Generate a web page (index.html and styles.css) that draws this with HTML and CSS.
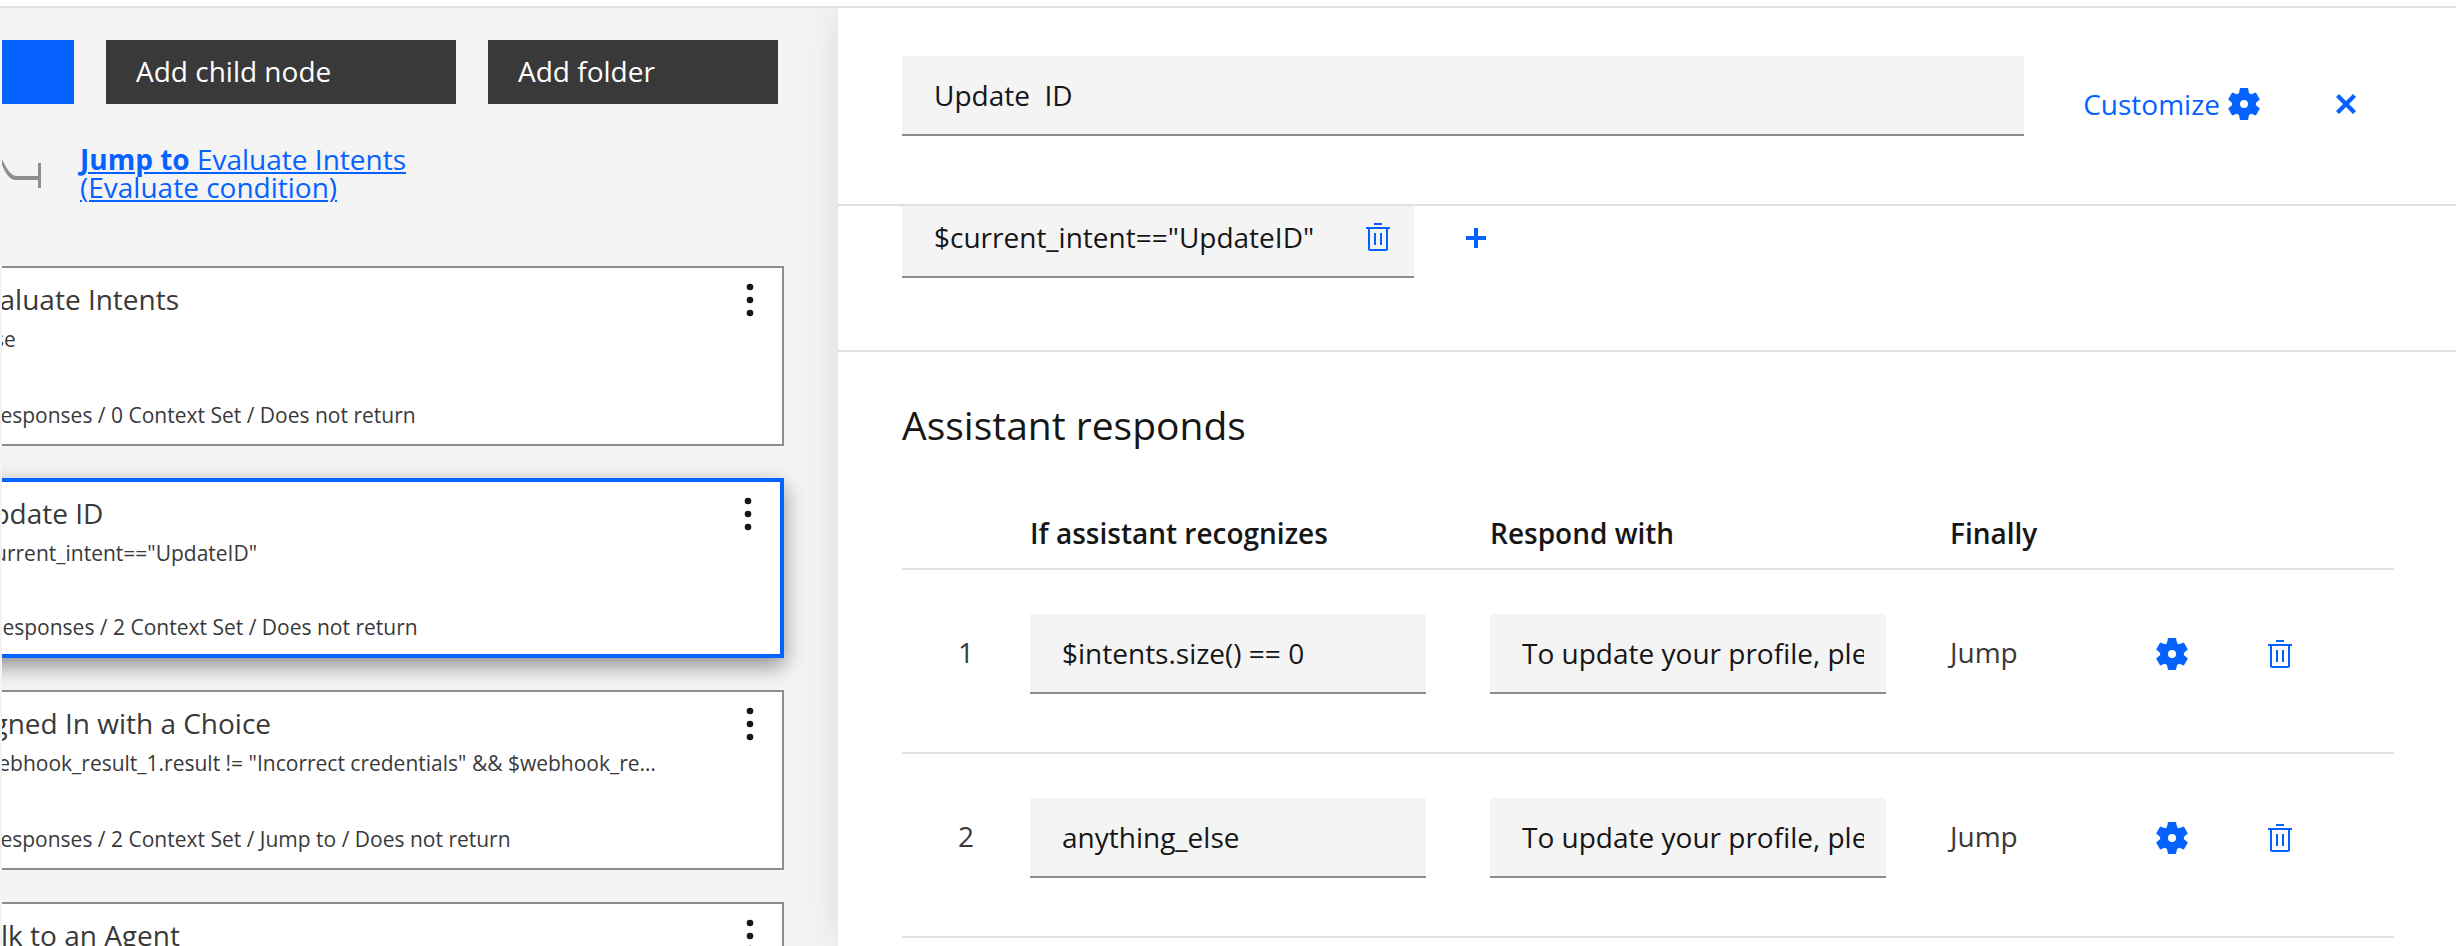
FILE: index.html
```
<!DOCTYPE html>
<html lang="en">
<head>
<meta charset="utf-8">
<title>Dialog</title>
<link rel="stylesheet" href="styles.css">
</head>
<body>
<svg class="sprite" aria-hidden="true">
  <symbol id="trash" viewBox="0 0 32 32"><path d="M12 12h2v12h-2zM18 12h2v12h-2zM4 6v2h2v20a2 2 0 0 0 2 2h16a2 2 0 0 0 2-2V8h2V6zM8 28V8h16v20zM12 2h8v2h-8z"/></symbol>
  <symbol id="gear" viewBox="-16 -16 32 32">
    <path fill-rule="evenodd" d="M0-12a12 12 0 1 0 0 24a12 12 0 1 0 0-24zM0-4a4 4 0 1 1 0 8a4 4 0 1 1 0-8z"/>
    <path id="tooth" d="M-4-16h8l1 5h-10z"/>
    <use href="#tooth" transform="rotate(60)"/>
    <use href="#tooth" transform="rotate(120)"/>
    <use href="#tooth" transform="rotate(180)"/>
    <use href="#tooth" transform="rotate(240)"/>
    <use href="#tooth" transform="rotate(300)"/>
  </symbol>
  <symbol id="dots" viewBox="0 0 32 40"><circle cx="16" cy="7" r="3.3"/><circle cx="16" cy="20" r="3.3"/><circle cx="16" cy="33" r="3.3"/></symbol>
</svg>
<div class="app">
  <div class="topbar"></div>
  <div class="workspace">
    <section class="tree" aria-label="Nodes">
      <div class="tree-view">
        <div class="tree-content">
          <div class="toolbar">
            <button class="btn btn-primary" type="button">Add node</button>
            <button class="btn" type="button">Add child node</button>
            <button class="btn btn-folder" type="button">Add folder</button>
          </div>
          <div class="jump">
            <svg class="jump-arrow" viewBox="0 0 40 56" aria-hidden="true">
              <path d="M0 14V20C4 29 8 35 14 35H36V31H15C10 31 6 27 0 14z"/>
              <path d="M36 18h3v25h-3z"/>
            </svg>
            <a class="jump-link" href="#evaluate"><strong>Jump to</strong> Evaluate Intents<br>(Evaluate condition)</a>
          </div>
          <div class="cards">
            <article class="card" id="evaluate">
              <div class="card-body">
                <div class="card-title">Evaluate Intents</div>
                <div class="card-condition">false</div>
                <div class="card-meta">0 Responses / 0 Context Set / Does not return</div>
              </div>
              <button class="card-menu" type="button" aria-label="Node options"><svg class="dots"><use href="#dots"/></svg></button>
            </article>
            <article class="card card-selected">
              <div class="card-body">
                <div class="card-title">Update ID</div>
                <div class="card-condition">$current_intent=="UpdateID"</div>
                <div class="card-meta">2 Responses / 2 Context Set / Does not return</div>
              </div>
              <button class="card-menu" type="button" aria-label="Node options"><svg class="dots"><use href="#dots"/></svg></button>
            </article>
            <article class="card">
              <div class="card-body">
                <div class="card-title">Signed In with a Choice</div>
                <div class="card-condition">$webhook_result_1.result != "Incorrect credentials" &amp;&amp; $webhook_result_1</div>
                <div class="card-meta">0 Responses / 2 Context Set / Jump to / Does not return</div>
              </div>
              <button class="card-menu" type="button" aria-label="Node options"><svg class="dots"><use href="#dots"/></svg></button>
            </article>
            <article class="card">
              <div class="card-body">
                <div class="card-title">Talk to an Agent</div>
              </div>
              <button class="card-menu" type="button" aria-label="Node options"><svg class="dots"><use href="#dots"/></svg></button>
            </article>
          </div>
        </div>
      </div>
    </section>

    <main class="editor">
      <header class="editor-header">
        <input class="field name-field" type="text" aria-label="Node name" value="Update  ID">
        <div class="header-actions">
          <button class="customize" type="button">Customize<svg class="icon"><use href="#gear"/></svg></button>
          <button class="icon-btn" type="button" aria-label="Close"><svg class="icon-small" viewBox="0 0 20 20"><path d="M3 0L10 7L17 0L20 3L13 10L20 17L17 20L10 13L3 20L0 17L7 10L0 3z"/></svg></button>
        </div>
      </header>
      <div class="editor-scroll">
        <section class="conditions">
          <div class="condition">
            <input class="condition-input" type="text" aria-label="Condition" value="$current_intent==&quot;UpdateID&quot;">
            <button class="icon-btn" type="button" aria-label="Delete condition"><svg class="icon"><use href="#trash"/></svg></button>
          </div>
          <button class="icon-btn" type="button" aria-label="Add condition"><svg class="icon-small" viewBox="0 0 20 20"><path d="M8 0h4v8h8v4h-8v8H8v-8H0V8h8z"/></svg></button>
        </section>
        <section class="responses">
          <h2 class="heading">Assistant responds</h2>
          <table class="table">
            <colgroup><col class="col-index"><col><col><col class="col-finally"><col class="col-edit"><col class="col-delete"></colgroup>
            <thead>
              <tr><th></th><th>If assistant recognizes</th><th>Respond with</th><th>Finally</th><th></th><th></th></tr>
            </thead>
            <tbody>
              <tr>
                <td class="index">1</td>
                <td class="cell-field"><input class="field" type="text" aria-label="Condition 1" value="$intents.size() == 0"></td>
                <td class="cell-field"><input class="field" type="text" aria-label="Response 1" value="To update your profile, please"></td>
                <td class="finally">Jump</td>
                <td><button class="icon-btn row-btn" type="button" aria-label="Edit response 1"><svg class="icon"><use href="#gear"/></svg></button></td>
                <td><button class="icon-btn row-btn delete-btn" type="button" aria-label="Delete response 1"><svg class="icon"><use href="#trash"/></svg></button></td>
              </tr>
              <tr>
                <td class="index">2</td>
                <td class="cell-field"><input class="field" type="text" aria-label="Condition 2" value="anything_else"></td>
                <td class="cell-field"><input class="field" type="text" aria-label="Response 2" value="To update your profile, please"></td>
                <td class="finally">Jump</td>
                <td><button class="icon-btn row-btn" type="button" aria-label="Edit response 2"><svg class="icon"><use href="#gear"/></svg></button></td>
                <td><button class="icon-btn row-btn delete-btn" type="button" aria-label="Delete response 2"><svg class="icon"><use href="#trash"/></svg></button></td>
              </tr>
            </tbody>
          </table>
        </section>
      </div>
    </main>
  </div>
</div>
</body>
</html>
```

FILE: styles.css
```
* {
  box-sizing: border-box;
}

body {
  margin: 0;
  background: #fff;
  color: #161616;
  font-family: "Open Sans", "Noto Sans", sans-serif;
  font-size: 28px;
  line-height: 36px;
}

button,
input {
  font: inherit;
  color: inherit;
  margin: 0;
  border: 0;
  border-radius: 0;
  outline: 0;
}

button {
  padding: 0;
  background: none;
  cursor: pointer;
}

svg {
  display: block;
  flex-shrink: 0;
  fill: currentColor;
}

.sprite {
  position: absolute;
  width: 0;
  height: 0;
}

.app {
  display: flex;
  flex-direction: column;
  height: 100vh;
  overflow: hidden;
}

.topbar {
  flex: none;
  height: 8px;
  border-bottom: 2px solid #e0e0e0;
}

.workspace {
  display: grid;
  grid-template-columns: 838px minmax(0, 1fr);
  flex: 1;
  min-height: 0;
  overflow: hidden;
}

/* Node tree, scrolled sideways */
.tree {
  min-height: 0;
  padding-left: 2px;
  background: #f4f4f4;
}

.tree-view {
  height: 100%;
  overflow: hidden;
}

.tree-content {
  margin-left: -64px;
  padding: 32px 54px 0 0;
}

.toolbar {
  display: flex;
  justify-content: flex-end;
  gap: 32px;
  padding-right: 6px;
}

.btn {
  flex: none;
  width: 350px;
  height: 64px;
  padding: 0 30px 2px;
  background: #393939;
  color: #fff;
  text-align: left;
}

.btn-primary {
  background: #0562ff;
}

.btn-folder {
  width: 290px;
}

.jump {
  display: flex;
  gap: 38px;
  margin-top: 41px;
  padding-left: 64px;
  line-height: 28px;
}

.jump-arrow {
  width: 40px;
  height: 56px;
  color: #8d8d8d;
}

.jump-link {
  color: #0562ff;
  text-decoration-thickness: 2px;
  text-underline-offset: 2px;
}

.cards {
  display: flex;
  flex-direction: column;
  gap: 32px;
  margin-top: 65px;
}

.card {
  display: flex;
  height: 180px;
  border: 2px solid #8d8d8d;
  background: #fff;
  color: #393939;
}

.card-selected {
  border: 4px solid #0562ff;
  box-shadow: 0 8px 20px rgba(0, 0, 0, 0.42);
}

.card-body {
  display: flex;
  flex: 1;
  flex-direction: column;
  min-width: 0;
  padding: 13px 56px 15px 30px;
}

.card-selected .card-body {
  padding-bottom: 13px;
}

.card-condition,
.card-meta {
  overflow: hidden;
  font-size: 21px;
  line-height: 28px;
  text-overflow: ellipsis;
  white-space: nowrap;
}

.card-condition {
  margin-top: 8px;
}

.card-meta {
  margin-top: auto;
}

.card-menu {
  display: flex;
  align-items: center;
  justify-content: center;
  width: 64px;
  height: 64px;
  color: #161616;
}

.dots {
  width: 32px;
  height: 40px;
}

/* Node editor */
.editor {
  display: flex;
  flex-direction: column;
  min-height: 0;
  background: #fff;
  box-shadow: 0 0 40px rgba(0, 0, 0, 0.1);
}

.editor-header {
  display: flex;
  flex: none;
  padding: 48px 100px 68px 64px;
  border-bottom: 2px solid #e0e0e0;
}

.field {
  display: block;
  width: 100%;
  height: 80px;
  padding: 0 22px 0 32px;
  border-bottom: 2px solid #8d8d8d;
  background: #f4f4f4;
}

.name-field {
  flex: 1;
  min-width: 0;
}

.header-actions {
  display: flex;
  align-items: center;
  align-self: flex-end;
  justify-content: flex-end;
  gap: 76px;
  width: 332px;
  height: 64px;
}

.customize {
  display: flex;
  align-items: center;
  gap: 8px;
  color: #0562ff;
}

.icon-btn {
  display: flex;
  align-items: center;
  flex: none;
  color: #0562ff;
}

.icon {
  width: 32px;
  height: 32px;
}

.icon-small {
  width: 20px;
  height: 20px;
}

.editor-scroll {
  flex: 1;
  min-height: 0;
  overflow: hidden;
}

.conditions {
  display: flex;
  gap: 52px;
  margin-top: -8px;
  padding: 0 64px 72px;
  border-bottom: 2px solid #e0e0e0;
}

.condition {
  display: flex;
  width: 512px;
  height: 80px;
  padding-right: 20px;
  border-bottom: 2px solid #8d8d8d;
  background: #f4f4f4;
}

.condition-input {
  flex: 1;
  min-width: 0;
  padding: 0 0 0 32px;
  background: transparent;
}

.responses {
  padding: 49px 62px 0 64px;
}

.heading {
  margin: 0;
  font-size: 39px;
  font-weight: 400;
  line-height: 48px;
}

.table {
  width: 100%;
  margin-top: 66px;
  border-spacing: 0;
  table-layout: fixed;
}

.col-index {
  width: 128px;
}

.col-finally {
  width: 206px;
}

.col-edit {
  width: 112px;
}

.col-delete {
  width: 126px;
}

.table th {
  padding: 0 0 17px;
  border-bottom: 2px solid #e0e0e0;
  font-weight: 600;
  text-align: left;
}

.table td {
  padding: 44px 0 58px;
  border-bottom: 2px solid #e0e0e0;
  vertical-align: top;
}

.table .cell-field {
  padding-right: 64px;
}

.index,
.finally {
  color: #393939;
  line-height: 76px;
}

.index {
  text-align: center;
}

.row-btn {
  height: 80px;
}

.delete-btn {
  margin-left: -4px;
}
```
